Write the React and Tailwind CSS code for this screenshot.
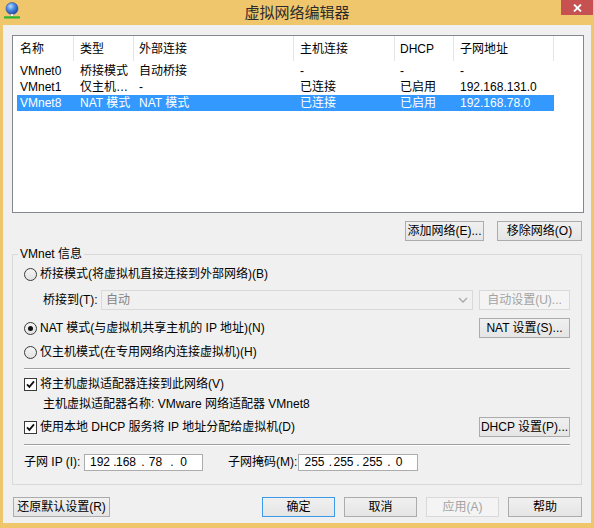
import React from "react";

const F = "font-['Liberation_Sans','Noto_Sans_CJK_SC',sans-serif]";

function Btn({ children, className = "", disabled, focused }) {
  const tone = disabled
    ? "border-[#d9d9d9] bg-[#f4f4f4] text-[#a3a3a3]"
    : focused
    ? "border-[#3c9ae8] bg-linear-to-b from-[#f0f0f0] to-[#e5e5e5] text-black"
    : "border-[#acacac] bg-linear-to-b from-[#f0f0f0] to-[#e5e5e5] text-black";
  return (
    <div className={`h-[20px] flex items-center justify-center border whitespace-nowrap ${tone} ${className}`}>
      {children}
    </div>
  );
}

function Radio({ checked }) {
  return (
    <span className="w-[13px] h-[13px] rounded-full border border-[#3a3a3a] bg-linear-to-b from-[#f4f4f4] to-[#e2e2e2] flex items-center justify-center shrink-0">
      {checked && <span className="w-[5px] h-[5px] rounded-full bg-[#111]" />}
    </span>
  );
}

function Check() {
  return (
    <span className="w-[13px] h-[13px] border border-[#3a3a3a] bg-white flex items-center justify-center shrink-0">
      <svg width="9" height="9" viewBox="0 0 9 9">
        <path d="M1 4.3 L3.4 6.8 L8 1.4" stroke="#111" strokeWidth="1.8" fill="none" />
      </svg>
    </span>
  );
}

function Globe() {
  return (
    <svg width="16" height="18" viewBox="0 0 16 18">
      <defs>
        <radialGradient id="g" cx="0.38" cy="0.32" r="0.7">
          <stop offset="0" stopColor="#b9dcff" />
          <stop offset="0.45" stopColor="#4f8fe6" />
          <stop offset="1" stopColor="#1c45a8" />
        </radialGradient>
      </defs>
      <circle cx="8" cy="7.5" r="6" fill="url(#g)" stroke="#2a4f9a" strokeWidth="0.6" />
      <rect x="6.3" y="13" width="3.4" height="2.6" fill="#fff" stroke="#777" strokeWidth="0.5" />
      <rect x="0" y="15.3" width="16" height="2.2" fill="#2db52d" />
    </svg>
  );
}

function IpField({ parts, offsets }) {
  // parts: list of strings; offsets: center deltas in px
  return (
    <div className="h-[17px] border border-[#acacac] bg-white flex items-center">
      {parts.map((p, i) => (
        <span
          key={i}
          className="w-0 flex justify-center whitespace-nowrap"
          style={{ marginLeft: offsets[i] }}
        >
          {p}
        </span>
      ))}
    </div>
  );
}

const cols = [
  { w: "w-[61px]", pl: "pl-[7px]" },
  { w: "w-[60px]", pl: "pl-[6px]" },
  { w: "w-[160px]", pl: "pl-[5px]" },
  { w: "w-[101px]", pl: "pl-[6px]" },
  { w: "w-[59px]", pl: "pl-[5px]" },
  { w: "w-[100px]", pl: "pl-[6px]" },
];

const rowW = ["w-[57px]", "w-[60px]", "w-[160px]", "w-[101px]", "w-[59px]", "w-[100px]"];
const rowPl = ["pl-[3px]", "pl-[6px]", "pl-[5px]", "pl-[6px]", "pl-[5px]", "pl-[6px]"];

const rows = [
  ["VMnet0", "桥接模式", "自动桥接", "-", "-", "-"],
  ["VMnet1", "仅主机…", "-", "已连接", "已启用", "192.168.131.0"],
  ["VMnet8", "NAT 模式", "NAT 模式", "已连接", "已启用", "192.168.78.0"],
];

export default function App() {
  return (
    <div className={`w-[594px] h-[528px] bg-[#efc66c] flex flex-col ${F} text-[12px] text-black leading-none`}>
      {/* Title bar */}
      <div className="h-[25px] grid grid-cols-[1fr_auto_1fr] items-start">
        <div className="pl-[4px] pt-[1px]">
          <Globe />
        </div>
        <div className="h-[24px] flex items-center text-[15px] text-[#2b2b2b]">虚拟网络编辑器</div>
        <div className="flex justify-end pr-[1px]">
          <div className="w-[32px] h-[15px] bg-[#c75050] flex items-center justify-center">
            <svg width="9" height="8" viewBox="0 0 9 8">
              <path d="M1 0.5 L8 7.5 M8 0.5 L1 7.5" stroke="#fff" strokeWidth="1.8" />
            </svg>
          </div>
        </div>
      </div>

      {/* Content */}
      <div className="mx-[3px] mb-[5px] flex-1 bg-[#f0f0f0] flex flex-col pl-[9px] pt-[10px]">
        {/* List */}
        <div className="w-[572px] h-[178px] border border-[#828790] bg-white flex flex-col">
          <div className="h-[25px] flex shrink-0">
            {["名称", "类型", "外部连接", "主机连接", "DHCP", "子网地址"].map((h, i) => (
              <div key={i} className={`${cols[i].w} ${cols[i].pl} h-full flex items-center border-r border-[#e5e5e5]`}>
                {h}
              </div>
            ))}
            <div className="flex-1" />
          </div>
          <div className="pt-[2px] flex flex-col">
            {rows.map((r, ri) => (
              <div
                key={ri}
                className={`ml-[4px] h-[16px] flex w-fit ${ri === 2 ? "bg-[#3399ff] text-white" : ""}`}
              >
                {r.map((c, ci) => (
                  <div key={ci} className={`${rowW[ci]} ${rowPl[ci]} h-full flex items-center whitespace-nowrap`}>
                    {c}
                  </div>
                ))}
              </div>
            ))}
          </div>
        </div>

        {/* Add/remove */}
        <div className="w-[572px] mt-[8px] flex justify-end gap-[13px] pr-[2px]">
          <Btn className="w-[79px]">添加网络(E)...</Btn>
          <Btn className="w-[85px]">移除网络(O)</Btn>
        </div>

        {/* Group */}
        <fieldset className="w-[570px] h-[239px] mt-[5px] border border-[#d9d9d9] px-[11px]">
          <legend className="-ml-[6px] px-[2px] leading-[16px] h-[16px]">VMnet 信息</legend>
          <div className="flex flex-col pt-[3px]">
            <div className="h-[18px] flex items-center gap-[3px]">
              <Radio />
              <span>桥接模式(将虚拟机直接连接到外部网络)(B)</span>
            </div>
            <div className="h-[20px] mt-[7px] flex items-center">
              <span className="pl-[19px] w-[77px] whitespace-nowrap">桥接到(T):</span>
              <div className="w-[372px] h-[20px] border border-[#d9d9d9] bg-[#f0f0f0] flex items-center pl-[4px] text-[#838383]">
                <span className="flex-1">自动</span>
                <svg width="10" height="6" viewBox="0 0 10 6" className="mr-[4px]">
                  <path d="M1 1 L5 5 L9 1" stroke="#a8a8a8" strokeWidth="1.3" fill="none" />
                </svg>
              </div>
              <Btn disabled className="w-[91px] ml-[6px]">自动设置(U)...</Btn>
            </div>
            <div className="h-[20px] mt-[8px] flex items-center">
              <div className="flex items-center gap-[3px]">
                <Radio checked />
                <span>NAT 模式(与虚拟机共享主机的 IP 地址)(N)</span>
              </div>
              <Btn className="w-[91px] ml-auto">NAT 设置(S)...</Btn>
            </div>
            <div className="h-[18px] mt-[5px] flex items-center gap-[3px]">
              <Radio />
              <span>仅主机模式(在专用网络内连接虚拟机)(H)</span>
            </div>
            <div className="mt-[7px] border-t border-b border-t-[#a0a0a0] border-b-white" />
            <div className="h-[18px] mt-[5px] flex items-center gap-[3px]">
              <Check />
              <span>将主机虚拟适配器连接到此网络(V)</span>
            </div>
            <div className="h-[16px] mt-[3px] flex items-center pl-[19px]">
              主机虚拟适配器名称: VMware 网络适配器 VMnet8
            </div>
            <div className="h-[20px] mt-[5px] flex items-center">
              <div className="flex items-center gap-[3px]">
                <Check />
                <span>使用本地 DHCP 服务将 IP 地址分配给虚拟机(D)</span>
              </div>
              <Btn className="w-[91px] ml-auto">DHCP 设置(P)...</Btn>
            </div>
            <div className="mt-[7px] border-t border-b border-t-[#a0a0a0] border-b-white" />
            <div className="h-[18px] mt-[7px] flex items-center">
              <span className="w-[60px] whitespace-nowrap">子网 IP (I):</span>
              <div className="w-[119px]">
                <IpField parts={["192", ".", "168", ".", "78", ".", "0"]} offsets={[15, 15, 11, 17, 12.5, 16.5, 11.5]} />
              </div>
              <span className="ml-[25px] w-[70px] whitespace-nowrap">子网掩码(M):</span>
              <div className="w-[120px]">
                <IpField parts={["255", ".", "255", ".", "255", ".", "0"]} offsets={[15.5, 16, 13, 14.5, 14.5, 16.5, 10]} />
              </div>
            </div>
          </div>
        </fieldset>

        {/* Bottom buttons */}
        <div className="w-[572px] mt-[12px] flex items-center">
          <Btn className="w-[97px] ml-[1px]">还原默认设置(R)</Btn>
          <div className="ml-auto flex gap-[9px] pr-[2px]">
            <Btn focused className="w-[73px]">确定</Btn>
            <Btn className="w-[73px]">取消</Btn>
            <Btn disabled className="w-[73px]">应用(A)</Btn>
            <Btn className="w-[74px]">帮助</Btn>
          </div>
        </div>
      </div>
    </div>
  );
}
